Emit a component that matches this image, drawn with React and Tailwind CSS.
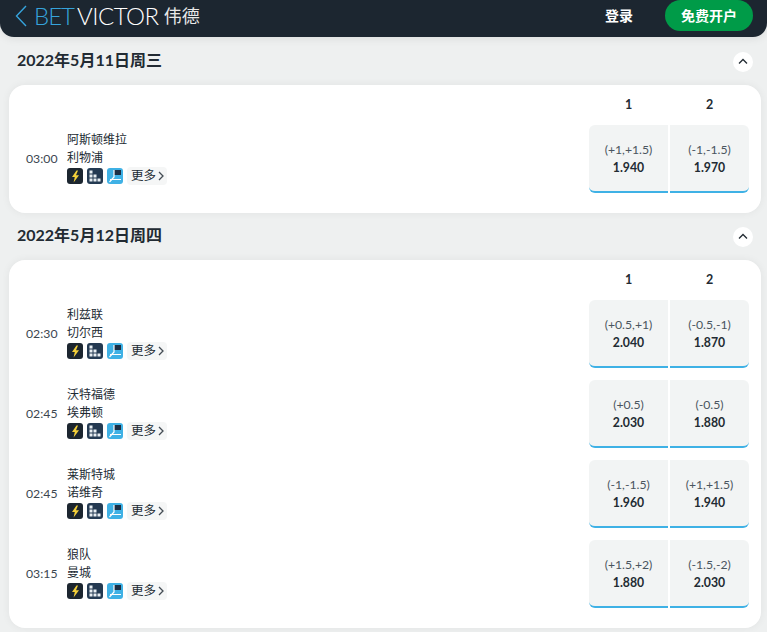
import React from "react";

const days = [
  {
    date: "2022年5月11日周三",
    matches: [
      { time: "03:00", home: "阿斯顿维拉", away: "利物浦", odds: [["(+1,+1.5)", "1.940"], ["(-1,-1.5)", "1.970"]] },
    ],
  },
  {
    date: "2022年5月12日周四",
    matches: [
      { time: "02:30", home: "利兹联", away: "切尔西", odds: [["(+0.5,+1)", "2.040"], ["(-0.5,-1)", "1.870"]] },
      { time: "02:45", home: "沃特福德", away: "埃弗顿", odds: [["(+0.5)", "2.030"], ["(-0.5)", "1.880"]] },
      { time: "02:45", home: "莱斯特城", away: "诺维奇", odds: [["(-1,-1.5)", "1.960"], ["(+1,+1.5)", "1.940"]] },
      { time: "03:15", home: "狼队", away: "曼城", odds: [["(+1.5,+2)", "1.880"], ["(-1.5,-2)", "2.030"]] },
    ],
  },
];

const BoltIcon = () => (
  <div className="w-4 h-4 rounded-[3px] bg-[#1c2630] flex items-center justify-center">
    <svg width="9" height="13" viewBox="0 0 9 13">
      <path d="M5.5 0.5 L1 7 H3.8 L2.6 12.5 L8 5.2 H5 L7 0.5 Z" fill="#f4d03a" />
    </svg>
  </div>
);

const StatsIcon = () => (
  <div className="w-4 h-4 rounded-[3px] bg-[#243a52] flex items-center justify-center">
    <svg width="14" height="14" viewBox="0 0 14 14" fill="#e8eef2">
      <rect x="1.5" y="1.5" width="3" height="3" />
      <rect x="1.5" y="5.5" width="3" height="3" />
      <rect x="5.5" y="5.5" width="3" height="3" />
      <rect x="1.5" y="9.5" width="3" height="3" />
      <rect x="5.5" y="9.5" width="3" height="3" />
      <rect x="9.5" y="9.5" width="3" height="3" />
    </svg>
  </div>
);

const PitchIcon = () => (
  <div className="w-4 h-4 rounded-[3px] bg-[#3fb1e5] flex items-center justify-center">
    <svg width="16" height="16" viewBox="0 0 16 16" fill="none">
      <rect x="7" y="2" width="7" height="5" fill="#1c2f45" />
      <path d="M7 2 V9 L2.5 14 M3 11.5 H14" stroke="#ffffff" strokeWidth="1.2" />
    </svg>
  </div>
);

const OddsCell = ({ line, price }) => (
  <div className="w-[79px] h-[68px] bg-[#f2f4f4] border-b-2 border-[#3fb1e5] first:rounded-l-[6px] last:rounded-r-[6px] flex flex-col items-center justify-center pt-[1px]">
    <div className="text-[12.25px] leading-[18px] text-[#4a5560]">{line}</div>
    <div className="text-[12.25px] leading-[17px] font-bold text-[#222b33]">{price}</div>
  </div>
);

const MatchRow = ({ match }) => (
  <div className="flex items-center h-[68px] mb-3 last:mb-0">
    <div className="w-[58px] pl-[17px] pt-[1px] text-[12.25px] text-[#3c4650]">{match.time}</div>
    <div className="flex-1 pb-[2px]">
      <div className="text-[12px] leading-[18px] text-[#222b33]">{match.home}</div>
      <div className="text-[12px] leading-[18px] text-[#222b33]">{match.away}</div>
      <div className="flex items-center gap-1">
        <BoltIcon />
        <StatsIcon />
        <PitchIcon />
        <div className="flex items-center h-[18px] pl-1 pr-[2px] w-[40px] rounded-[4px] bg-[#f5f6f6] text-[12.5px] text-[#222b33]">
          更多
          <svg width="8" height="12" viewBox="0 0 8 12" fill="none" className="ml-[1px]">
            <path d="M2 2 L6 6 L2 10" stroke="#444c54" strokeWidth="1.3" />
          </svg>
        </div>
      </div>
    </div>
    <div className="flex gap-[2px] mr-3">
      {match.odds.map((o) => (
        <OddsCell key={o[0]} line={o[0]} price={o[1]} />
      ))}
    </div>
  </div>
);

const DaySection = ({ day }) => (
  <div>
    <div className="flex items-center justify-between h-[47px] pb-[4px] pl-[17px] pr-[14px]">
      <h2 className="text-[16px] font-bold text-[#222b33]">{day.date}</h2>
      <button className="w-5 h-5 mt-[4px] rounded-full bg-white flex items-center justify-center">
        <svg width="10" height="7" viewBox="0 0 10 7" fill="none">
          <path d="M1 5.5 L5 1.5 L9 5.5" stroke="#222b33" strokeWidth="1.3" />
        </svg>
      </button>
    </div>
    <div className="ml-[9px] mr-[6px] bg-white rounded-[16px] pb-5 shadow-[0_0_8px_rgba(0,0,0,0.06)]">
      <div className="flex justify-end h-[40px] items-center mr-3 text-[12.5px] font-bold text-[#222b33]">
        <div className="w-[79px] text-center">1</div>
        <div className="w-[2px]" />
        <div className="w-[79px] text-center">2</div>
      </div>
      {day.matches.map((m) => (
        <MatchRow key={m.home} match={m} />
      ))}
    </div>
  </div>
);

export default function App() {
  return (
    <div className="h-[632px] overflow-hidden bg-[#eef0f0] font-['Lato','Noto_Sans_CJK_SC',sans-serif]">
      <header className="relative h-[37px] mb-[1px] bg-[#1c2630] rounded-b-[14px] shadow-[0_2px_8px_rgba(0,0,0,0.08)] flex items-center justify-between pb-[6px] pl-[15px] pr-[14px]">
        <div className="flex items-center">
          <svg width="12" height="24" viewBox="0 0 12 24" fill="none">
            <path d="M11 2 L1.5 12 L11 22" stroke="#36a3db" strokeWidth="1.4" />
          </svg>
          <span className="ml-[7px] text-[24px] font-light leading-none tracking-[-1px] text-[#36a3db]">BET</span>
          <span className="ml-[3px] text-[24px] font-light leading-none tracking-[-0.5px] text-white">VICTOR</span>
          <span className="ml-[5px] text-[18px] leading-none text-[#e8e8e8]">伟德</span>
        </div>
        <div className="flex items-center">
          <span className="text-[14px] font-bold text-white mr-[32px]">登录</span>
          <button className="w-[88px] h-[31px] rounded-full bg-[#009b48] text-white text-[14px] font-bold">
            免费开户
          </button>
        </div>
      </header>
      {days.map((d) => (
        <DaySection key={d.date} day={d} />
      ))}
    </div>
  );
}
